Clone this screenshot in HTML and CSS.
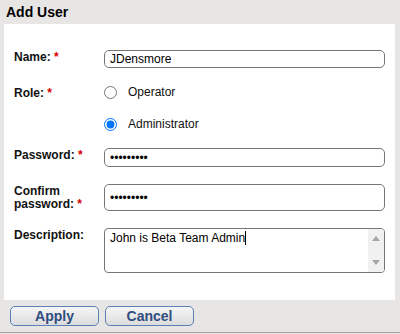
FILE: index.html
```html
<!DOCTYPE html>
<html>
<head>
<meta charset="utf-8">
<link rel="stylesheet" href="styles.css">
</head>
<body>
<div class="dialog">
  <div class="title">Add User</div>
  <div class="panel">
    <div class="form">
      <div class="row">
        <label class="label">Name: <span class="req">*</span></label>
        <input class="field input-name" type="text" value="JDensmore">
      </div>
      <div class="row">
        <label class="label label-role">Role: <span class="req">*</span></label>
        <div class="radios">
          <label class="radio-item"><input type="radio" name="role"><span>Operator</span></label>
          <label class="radio-item"><input type="radio" name="role" checked><span>Administrator</span></label>
        </div>
      </div>
      <div class="row">
        <label class="label">Password: <span class="req">*</span></label>
        <input class="field input-pass" type="password" value="123456789">
      </div>
      <div class="row">
        <label class="label label-two">Confirm<br>password: <span class="req">*</span></label>
        <input class="field input-confirm" type="password" value="123456789">
      </div>
      <div class="row">
        <label class="label">Description:</label>
        <div class="textarea">
          <div class="textarea-text">John is Beta Team Admin<span class="caret"></span></div>
          <div class="scrollbar">
            <svg width="8" height="5" viewBox="0 0 8 5"><path d="M0 5 L4 0 L8 5 Z" fill="#a6a6a6"/></svg>
            <svg width="8" height="5" viewBox="0 0 8 5"><path d="M0 0 L8 0 L4 5 Z" fill="#a6a6a6"/></svg>
          </div>
        </div>
      </div>
    </div>
  </div>
  <div class="buttons">
    <button class="btn">Apply</button>
    <button class="btn">Cancel</button>
  </div>
</div>
</body>
</html>
```

FILE: styles.css
```css
html, body {
  margin: 0;
  padding: 0;
  background: #e8e6e5;
  font-family: "Liberation Sans", Arial, sans-serif;
}

.dialog {
  width: 400px;
  height: 332px;
  border-bottom: 1px solid #a2a2a2;
  display: flex;
  flex-direction: column;
}

.title {
  height: 24px;
  line-height: 24px;
  padding-left: 6px;
  font-size: 14px;
  font-weight: bold;
  color: #000;
}

.panel {
  height: 276px;
  margin: 0 5px 0 4px;
  background: #fff;
  padding: 26px 10px 0 10px;
  box-sizing: border-box;
}

.form {
  display: flex;
  flex-direction: column;
  gap: 17px;
}

.row {
  display: grid;
  grid-template-columns: 90px 281px;
  align-items: start;
}

.label {
  font-size: 12px;
  line-height: 14px;
  font-weight: bold;
  color: #111;
}

.label-role {
  padding-top: 1px;
}

.label-two {
  line-height: 13px;
  padding-top: 1px;
}

.req {
  color: #d40000;
}

.field {
  box-sizing: border-box;
  width: 281px;
  margin: 0;
  border: 1px solid #767676;
  border-radius: 5px;
  padding: 0 5px;
  font-family: "Liberation Sans", Arial, sans-serif;
  font-size: 12px;
  color: #000;
  background: #fff;
  outline: none;
}

.input-name {
  height: 18px;
}

.input-pass {
  height: 19px;
}

.input-confirm {
  height: 27px;
}

.radios {
  display: flex;
  flex-direction: column;
  gap: 18px;
}

.radio-item {
  display: flex;
  align-items: center;
  gap: 11px;
  height: 14px;
  font-size: 12px;
  color: #111;
}

.radio-item input {
  margin: 0;
  width: 13px;
  height: 13px;
}

.textarea {
  box-sizing: border-box;
  width: 281px;
  height: 45px;
  border: 1px solid #767676;
  border-radius: 4px;
  display: flex;
  overflow: hidden;
}

.textarea-text {
  flex: 1;
  padding: 2px 5px;
  font-size: 12px;
  line-height: 14px;
  color: #000;
}

.caret {
  display: inline-block;
  width: 1px;
  height: 14px;
  background: #000;
  vertical-align: -3px;
}

.scrollbar {
  width: 16px;
  background: #f1f1f1;
  display: flex;
  flex-direction: column;
  justify-content: space-between;
  align-items: center;
  padding: 7px 0 7px 0;
  box-sizing: border-box;
}

.scrollbar svg {
  display: block;
}

.buttons {
  display: flex;
  gap: 6px;
  padding: 6px 0 0 10px;
}

.btn {
  width: 89px;
  height: 20px;
  margin: 0;
  padding: 0;
  border: 1px solid #5a80b8;
  border-radius: 5px;
  background: linear-gradient(#f6f6f6, #dcdcdc);
  font-family: "Liberation Sans", Arial, sans-serif;
  font-size: 14px;
  font-weight: bold;
  color: #2f4d7e;
  line-height: 18px;
}
```
